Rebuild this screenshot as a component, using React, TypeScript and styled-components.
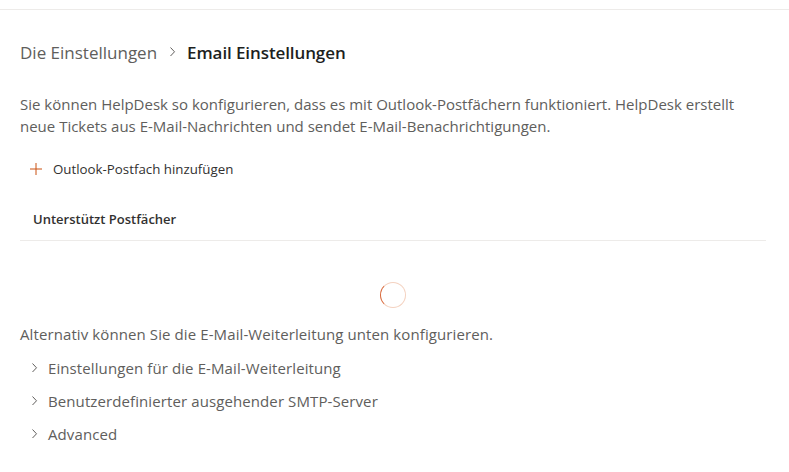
import React from "react";
import styled, { createGlobalStyle, keyframes } from "styled-components";

const GlobalStyle = createGlobalStyle`
  html, body {
    margin: 0;
    padding: 0;
    background: #ffffff;
    font-family: "Segoe UI", "Open Sans", "Noto Sans", sans-serif;
    color: #323130;
  }
`;

const TopBar = styled.div`
  height: 9px;
  border-bottom: 1px solid #edebe9;
`;

const Page = styled.main`
  padding: 0 23px 0 20px;
`;

const Breadcrumb = styled.nav`
  display: flex;
  align-items: center;
  height: 26px;
  margin-top: 29px;
  font-size: 17px;
`;

const Crumb = styled.span<{ $current?: boolean }>`
  color: ${(p) => (p.$current ? "#201f1e" : "#605e5c")};
  font-weight: ${(p) => (p.$current ? 600 : 400)};
  letter-spacing: ${(p) => (p.$current ? "-0.1px" : "0")};
`;

const CrumbSep = styled.span`
  display: flex;
  align-items: center;
  padding: 0 8px 0 10px;
  color: #605e5c;
`;

const Description = styled.p`
  margin: 28px 0 0;
  font-size: 15px;
  line-height: 22px;
  color: #605e5c;
`;

const AddButton = styled.button`
  display: flex;
  align-items: center;
  gap: 11px;
  margin-top: 16px;
  padding: 0 10px;
  height: 32px;
  border: none;
  background: transparent;
  font: inherit;
  font-size: 13.3px;
  color: #323130;
  cursor: pointer;
`;

const TableHeader = styled.div`
  display: flex;
  align-items: center;
  height: 42px;
  margin-top: 13px;
  padding-left: 13px;
  border-bottom: 1px solid #edebe9;
  font-size: 13px;
  font-weight: 600;
  color: #323130;
`;

const SpinnerRow = styled.div`
  display: flex;
  justify-content: center;
  padding: 41px 0 15px;
`;

const spin = keyframes`
  from { transform: rotate(0deg); }
  to { transform: rotate(360deg); }
`;

const Spinner = styled.div`
  width: 24px;
  height: 24px;
  border-radius: 50%;
  border: 1.5px solid #f4d2c0;
  border-left-color: #d8683a;
  animation: ${spin} 1.3s linear infinite;
  animation-play-state: paused;
`;

const AltText = styled.p`
  margin: 0;
  font-size: 15px;
  line-height: 22px;
  letter-spacing: 0.1px;
  color: #605e5c;
`;

const SectionList = styled.ul`
  list-style: none;
  margin: 6px 0 0;
  padding: 0;
`;

const SectionItem = styled.li`
  display: flex;
  align-items: center;
  gap: 7px;
  height: 33px;
  padding-left: 9px;
  font-size: 15px;
  letter-spacing: 0.1px;
  color: #605e5c;
  cursor: pointer;
`;

const Chevron = () => (
  <svg width="12" height="12" viewBox="0 0 12 12" fill="none">
    <path d="M3.5 1.5 L7.5 5.8 L3.5 10" stroke="#605e5c" strokeWidth="1" />
  </svg>
);

const Plus = () => (
  <svg width="12" height="12" viewBox="0 0 12 12" fill="none">
    <path d="M6 0 V12 M0 6 H12" stroke="#ca5010" strokeWidth="1" />
  </svg>
);

const sections = [
  "Einstellungen für die E-Mail-Weiterleitung",
  "Benutzerdefinierter ausgehender SMTP-Server",
  "Advanced",
];

export default function App() {
  return (
    <>
      <GlobalStyle />
      <TopBar />
      <Page>
        <Breadcrumb>
          <Crumb>Die Einstellungen</Crumb>
          <CrumbSep>
            <Chevron />
          </CrumbSep>
          <Crumb $current>Email Einstellungen</Crumb>
        </Breadcrumb>
        <Description>
          Sie können HelpDesk so konfigurieren, dass es mit Outlook-Postfächern funktioniert.
          HelpDesk erstellt neue Tickets aus E-Mail-Nachrichten und sendet
          E-Mail-Benachrichtigungen.
        </Description>
        <AddButton>
          <Plus />
          Outlook-Postfach hinzufügen
        </AddButton>
        <TableHeader>Unterstützt Postfächer</TableHeader>
        <SpinnerRow>
          <Spinner />
        </SpinnerRow>
        <AltText>Alternativ können Sie die E-Mail-Weiterleitung unten konfigurieren.</AltText>
        <SectionList>
          {sections.map((s) => (
            <SectionItem key={s}>
              <Chevron />
              {s}
            </SectionItem>
          ))}
        </SectionList>
      </Page>
    </>
  );
}
